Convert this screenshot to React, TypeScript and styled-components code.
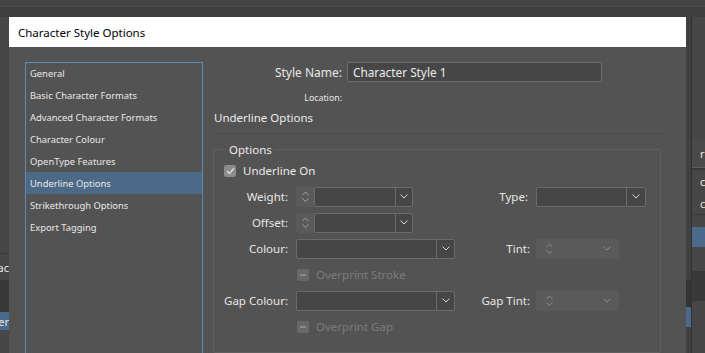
import React from "react";
import styled, { createGlobalStyle } from "styled-components";

const Global = createGlobalStyle`
  html, body { margin: 0; padding: 0; background: #3e3e3e; }
  body { font-family: "Noto Sans", "Open Sans", sans-serif; }
  * { box-sizing: border-box; }
`;

const Page = styled.div`
  width: 705px;
  height: 353px;
  overflow: hidden;
  display: grid;
  grid-template-columns: 9px 677px 6px 1fr;
  grid-template-rows: 17px 1fr;
  background: #3e3e3e;
`;

const TopBar = styled.div`
  grid-column: 1 / -1;
  background: #3f3f3f;
  display: flex;
  flex-direction: column;
  &::before {
    content: "";
    height: 6px;
    background: #444;
  }
  &::after {
    content: "";
    height: 1px;
    background: #4d4d4d;
  }
`;

const SideStrip = styled.div`
  display: flex;
  flex-direction: column;
  background: #474747;
  overflow: hidden;
`;

const Gutter = styled.div`
  display: flex;
  flex-direction: column;
  background: #404040;
  border-right: 1px solid #333;
`;

const StripBlock = styled.div<{ $h: number; $bg?: string; $end?: boolean; $pl?: number }>`
  flex: 0 0 ${(p) => p.$h}px;
  background: ${(p) => p.$bg ?? "transparent"};
  display: flex;
  align-items: center;
  justify-content: ${(p) => (p.$end ? "flex-end" : "flex-start")};
  padding-left: ${(p) => p.$pl ?? 0}px;
  white-space: nowrap;
  font-size: 11px;
  color: #e6e6e6;
  overflow: hidden;
`;

const Dialog = styled.div`
  display: flex;
  flex-direction: column;
  background: #535353;
  overflow: hidden;
`;

const TitleBar = styled.div`
  flex: 0 0 30px;
  background: #ffffff;
  color: #000;
  font-size: 11.5px;
  display: flex;
  align-items: center;
  padding-left: 9px;
`;

const Body = styled.div`
  flex: 1;
  display: flex;
  gap: 10px;
  padding: 15px 0 0 16px;
  min-height: 0;
`;

const CategoryList = styled.ul`
  list-style: none;
  margin: 0;
  padding: 0;
  width: 178px;
  flex: 0 0 178px;
  height: 320px;
  border: 1px solid #6389b8;
  border-bottom: none;
`;

const CategoryItem = styled.li<{ $active?: boolean }>`
  height: 22px;
  display: flex;
  align-items: center;
  padding-left: 4px;
  font-size: 9.4px;
  color: #e9e9e9;
  background: ${(p) => (p.$active ? "#4c6987" : "transparent")};
  &:first-child {
    margin-top: -1px;
  }
`;

const Panel = styled.div`
  width: 457px;
  display: flex;
  flex-direction: column;
`;

const NameRow = styled.div<{ $h: number; $mt?: number }>`
  display: grid;
  grid-template-columns: 129px 255px;
  column-gap: 5px;
  align-items: center;
  height: ${(p) => p.$h}px;
  margin-top: ${(p) => p.$mt ?? 0}px;
`;

const RightLabel = styled.span<{ $size?: number }>`
  text-align: right;
  font-size: ${(p) => p.$size ?? 11.5}px;
  color: #e8e8e8;
  white-space: nowrap;
`;

const TextInput = styled.div`
  height: 20px;
  background: #464646;
  border: 1px solid #6e6e6e;
  border-radius: 2px;
  display: flex;
  align-items: center;
  padding-left: 5px;
  font-size: 11.8px;
  color: #ececec;
`;

const Heading = styled.div`
  margin-top: 6px;
  line-height: 16px;
  padding-left: 1px;
  font-size: 11.5px;
  color: #ececec;
`;

const Separator = styled.div`
  margin-top: 7px;
  margin-left: 1px;
  width: 453px;
  height: 1px;
  background: #4a4a4a;
`;

const Group = styled.fieldset`
  margin: 8px 0 0 0;
  width: 448px;
  height: 230px;
  padding: 3px 0 0 0;
  border: 1px solid #5f5f5f;
  border-radius: 2px;
  display: grid;
  grid-template-columns: 82px 159px 81px 110px;
  grid-auto-rows: 20px;
  row-gap: 6px;
  align-content: start;
  align-items: center;
`;

const Legend = styled.legend`
  margin-left: 12px;
  padding: 0 3px;
  line-height: 16px;
  font-size: 11.5px;
  color: #ececec;
`;

const FieldLabel = styled.span<{ $pr: number }>`
  text-align: right;
  padding-right: ${(p) => p.$pr}px;
  font-size: 11.5px;
  color: #e6e6e6;
  white-space: nowrap;
`;

const CheckRow = styled.label<{ $col: string; $pl: number; $disabled?: boolean }>`
  grid-column: ${(p) => p.$col};
  display: flex;
  align-items: center;
  gap: 7px;
  padding-left: ${(p) => p.$pl}px;
  font-size: 11.5px;
  color: ${(p) => (p.$disabled ? "#7c7c7c" : "#ececec")};
  white-space: nowrap;
`;

const Box = styled.span<{ $disabled?: boolean }>`
  width: 12px;
  height: 12px;
  border-radius: 2px;
  background: ${(p) => (p.$disabled ? "#686868" : "#8b8b8b")};
  display: flex;
  align-items: center;
  justify-content: center;
`;

const Combo = styled.div<{ $w: number }>`
  width: ${(p) => p.$w}px;
  height: 20px;
  display: flex;
  justify-self: start;
`;

const ComboField = styled.div`
  flex: 1;
  display: flex;
  background: #464646;
  border: 1px solid #6b6b6b;
  border-radius: 2px;
`;

const ComboText = styled.div`
  flex: 1;
`;

const ComboButton = styled.div<{ $w: number }>`
  flex: 0 0 ${(p) => p.$w}px;
  border-left: 1px solid #6b6b6b;
  display: flex;
  align-items: center;
  justify-content: center;
`;

const Spinner = styled.div<{ $bg: string }>`
  flex: 0 0 18px;
  background: ${(p) => p.$bg};
  border-radius: 2px 0 0 2px;
  display: flex;
  flex-direction: column;
  align-items: center;
  justify-content: center;
  gap: 3px;
`;

const DisabledSpin = styled.div`
  width: 83px;
  height: 20px;
  background: #5a5a5a;
  border-radius: 2px;
  display: flex;
  align-items: center;
  justify-content: space-between;
  padding: 0 8px 0 4px;
  justify-self: start;
`;

const Chevron = ({ up, color, w = 8 }: { up?: boolean; color: string; w?: number }) => (
  <svg width={w} height={w / 2 + 1} viewBox={`0 0 ${w} ${w / 2 + 1}`}>
    <polyline
      points={up ? `0.5,${w / 2 + 0.5} ${w / 2},1 ${w - 0.5},${w / 2 + 0.5}` : `0.5,0.5 ${w / 2},${w / 2} ${w - 0.5},0.5`}
      fill="none"
      stroke={color}
      strokeWidth="1"
    />
  </svg>
);

const UpDown = ({ color }: { color: string }) => (
  <>
    <Chevron up color={color} w={7} />
    <Chevron color={color} w={7} />
  </>
);

const Check = () => (
  <svg width="9" height="8" viewBox="0 0 9 8">
    <polyline points="1,4.2 3.4,6.5 8,1.2" fill="none" stroke="#dedede" strokeWidth="1.4" />
  </svg>
);

const Dash = () => (
  <svg width="6" height="2" viewBox="0 0 6 2">
    <rect width="6" height="2" fill="#8a8a8a" />
  </svg>
);

const SpinCombo = () => (
  <Combo $w={117}>
    <Spinner $bg="#5a5a5a">
      <UpDown color="#a3a3a3" />
    </Spinner>
    <ComboField>
      <ComboText />
      <ComboButton $w={17}>
        <Chevron color="#d8d8d8" />
      </ComboButton>
    </ComboField>
  </Combo>
);

const DropCombo = ({ w, bw }: { w: number; bw: number }) => (
  <Combo $w={w}>
    <ComboField>
      <ComboText />
      <ComboButton $w={bw}>
        <Chevron color="#d8d8d8" />
      </ComboButton>
    </ComboField>
  </Combo>
);

const TintSpin = () => (
  <DisabledSpin>
    <Spinner $bg="transparent">
      <UpDown color="#8a8a8a" />
    </Spinner>
    <Chevron color="#8e8e8e" />
  </DisabledSpin>
);

const categories = [
  "General",
  "Basic Character Formats",
  "Advanced Character Formats",
  "Character Colour",
  "OpenType Features",
  "Underline Options",
  "Strikethrough Options",
  "Export Tagging",
];

export default function App() {
  return (
    <>
      <Global />
      <Page>
        <TopBar />
        <SideStrip>
          <StripBlock $h={236} />
          <StripBlock $h={1} $bg="#3a3a3a" />
          <StripBlock $h={26} $end>ac</StripBlock>
          <StripBlock $h={32} $bg="#393939" />
          <StripBlock $h={18} $bg="#4a6a8c" $end>er</StripBlock>
        </SideStrip>
        <Dialog>
          <TitleBar>Character Style Options</TitleBar>
          <Body>
            <CategoryList>
              {categories.map((c) => (
                <CategoryItem key={c} $active={c === "Underline Options"}>
                  {c}
                </CategoryItem>
              ))}
            </CategoryList>
            <Panel>
              <NameRow $h={20}>
                <RightLabel $size={12}>Style Name:</RightLabel>
                <TextInput>Character Style 1</TextInput>
              </NameRow>
              <NameRow $h={12} $mt={10}>
                <RightLabel $size={8.8}>Location:</RightLabel>
              </NameRow>
              <Heading>Underline Options</Heading>
              <Separator />
              <Group>
                <Legend>Options</Legend>
                <CheckRow $col="1 / -1" $pl={10}>
                  <Box>
                    <Check />
                  </Box>
                  Underline On
                </CheckRow>

                <FieldLabel $pr={8}>Weight:</FieldLabel>
                <SpinCombo />
                <FieldLabel $pr={8}>Type:</FieldLabel>
                <DropCombo w={110} bw={19} />

                <FieldLabel $pr={8}>Offset:</FieldLabel>
                <SpinCombo />
                <span />
                <span />

                <FieldLabel $pr={8}>Colour:</FieldLabel>
                <DropCombo w={159} bw={18} />
                <FieldLabel $pr={6}>Tint:</FieldLabel>
                <TintSpin />

                <CheckRow $col="2 / -1" $pl={1} $disabled>
                  <Box $disabled>
                    <Dash />
                  </Box>
                  Overprint Stroke
                </CheckRow>

                <FieldLabel $pr={8}>Gap Colour:</FieldLabel>
                <DropCombo w={159} bw={18} />
                <FieldLabel $pr={6}>Gap Tint:</FieldLabel>
                <TintSpin />

                <CheckRow $col="2 / -1" $pl={1} $disabled>
                  <Box $disabled>
                    <Dash />
                  </Box>
                  Overprint Gap
                </CheckRow>
              </Group>
            </Panel>
          </Body>
        </Dialog>
        <Gutter>
          <StripBlock $h={263} />
          <StripBlock $h={27} $bg="#343434" />
          <StripBlock $h={20} $bg="#4b6a8b" />
        </Gutter>
        <SideStrip>
          <StripBlock $h={123} />
          <StripBlock $h={27} $bg="#4a4a4a" $pl={8}>r</StripBlock>
          <StripBlock $h={1} $bg="#5e5e5e" />
          <StripBlock $h={2} $bg="#383838" />
          <StripBlock $h={22} $pl={8}>c</StripBlock>
          <StripBlock $h={22} $pl={8}>c</StripBlock>
          <StripBlock $h={1} $bg="#3a3a3a" />
          <StripBlock $h={12} />
          <StripBlock $h={20} $bg="#4b6a8b" />
          <StripBlock $h={24} />
          <StripBlock $h={30} $bg="#393939" />
        </SideStrip>
      </Page>
    </>
  );
}
